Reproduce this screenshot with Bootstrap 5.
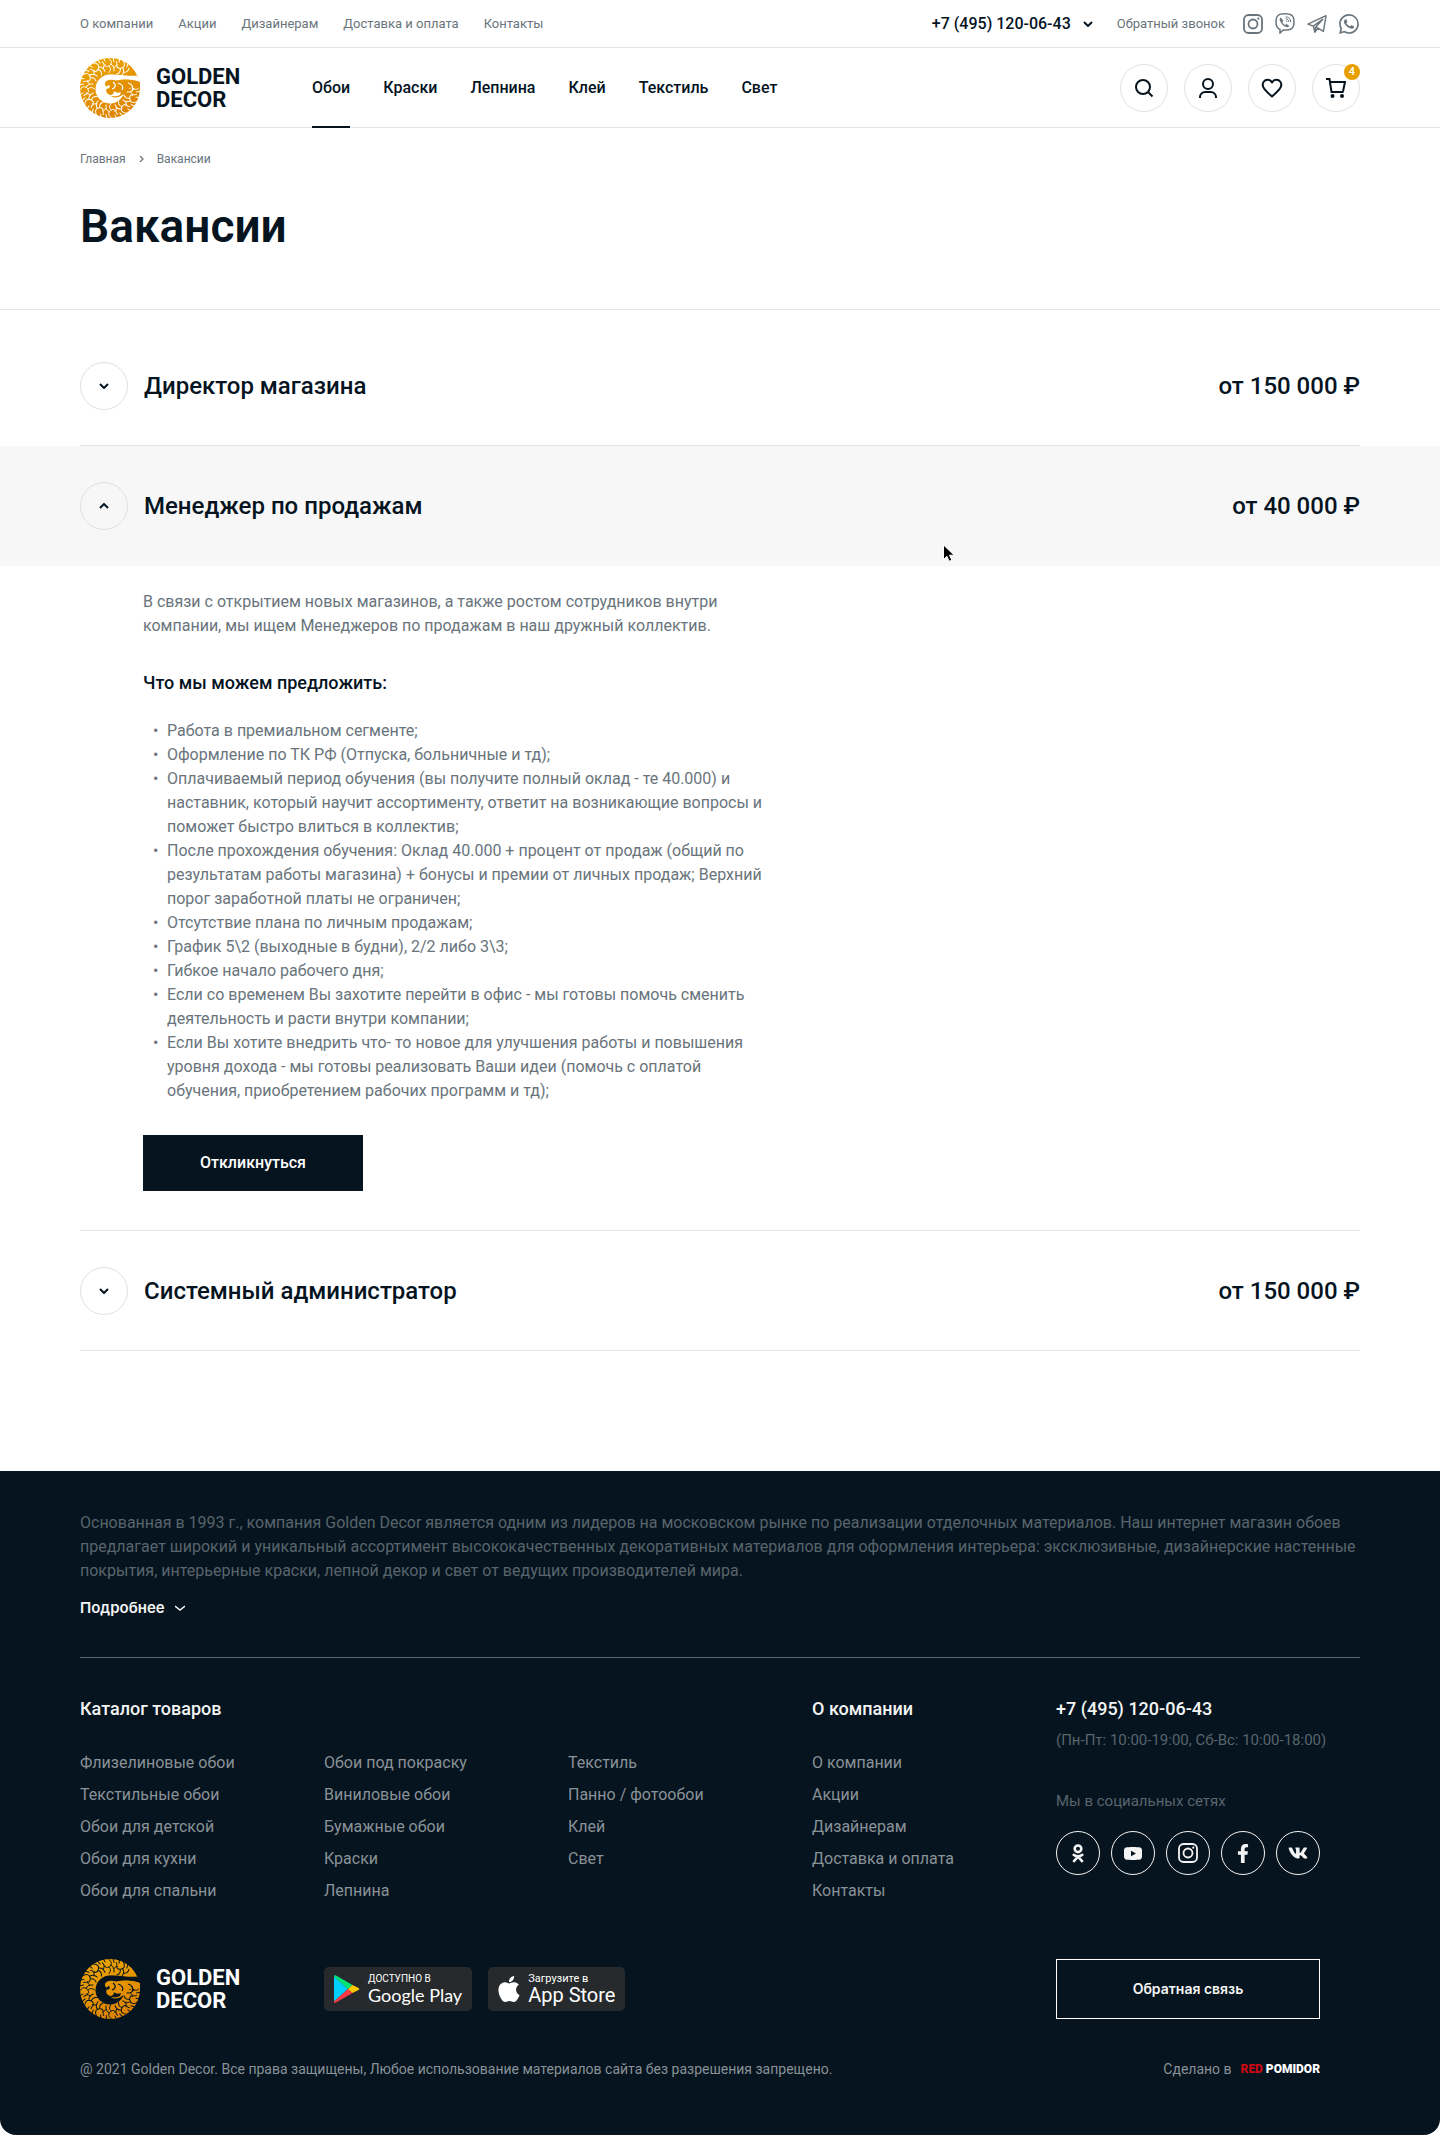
<!DOCTYPE html>
<html lang="ru">
<head>
<meta charset="utf-8">
<meta name="viewport" content="width=device-width, initial-scale=1">
<title>Вакансии — Golden Decor</title>
<link href="https://cdn.jsdelivr.net/npm/bootstrap@5.3.0/dist/css/bootstrap.min.css" rel="stylesheet">
<style>
  :root { --ink: #05141f; --muted: #69747c; --line: #e5e5e5; --gold: #e8a000; }
  body { font-family: Roboto, "Liberation Sans", sans-serif; color: var(--ink); font-size: 16px; line-height: 24px; background: #fff; }
  a { text-decoration: none; color: inherit; }
  svg { display: block; flex: none; }
  .wrap { max-width: 1440px; padding-left: 80px; padding-right: 80px; }

  .topbar { border-bottom: 1px solid var(--line); color: var(--muted); font-size: 13px; line-height: 47px; }
  .topbar nav { gap: 25px; }
  .phone-btn { border: 0; background: none; padding: 0; color: var(--ink); font-size: 16px; font-weight: 500; gap: 12px; }
  .messengers { gap: 12px; padding: 0 1px 0 18px; }
  .callback { margin-left: 24px; }

  .mainbar { border-bottom: 1px solid var(--line); }
  .brand { gap: 16px; width: 160px; }
  .brand-name { font-size: 22px; font-weight: 700; line-height: 23px; }
  .main-nav { gap: 33px; margin-left: 72px; }
  .main-nav a { font-weight: 500; line-height: 79px; margin-bottom: -1px; border-bottom: 2px solid transparent; height: 80px; }
  .main-nav a.current { border-color: var(--ink); }
  .round { width: 48px; height: 48px; border: 1px solid #e0e0e0; border-radius: 50%; background: none; color: var(--ink); padding: 0; }
  .count { position: absolute; top: -1px; right: -1px; width: 16px; height: 16px; border-radius: 50%; background: var(--gold); color: #fff; font-size: 11px; font-weight: 500; line-height: 16px; text-align: center; }

  .page-head { border-bottom: 1px solid var(--line); padding: 23px 0 55px; }
  .crumbs { font-size: 12px; line-height: 16px; color: var(--muted); gap: 13px; margin-bottom: 31px; }
  .page-head h1 { font-size: 46px; line-height: 56px; font-weight: 600; margin: 0; }

  .jobs { padding: 16px 0 120px; }
  .job-toggle { width: 100%; border: 0; background: none; padding: 0; color: var(--ink); height: 119px; font-size: 24px; font-weight: 500; gap: 16px; text-align: left; }
  .ruled { border-bottom: 1px solid var(--line); }
  .open-row { background: #f7f7f7; }
  .open-row .job-toggle { height: 120px; }
  .pointer { position: absolute; left: 942px; top: 98px; }
  .job-body { padding: 24px 0 39px 63px; color: var(--muted); }
  .job-text { max-width: 624px; }
  .job-text p { margin: 0; }
  .job-text h3 { font-size: 18px; line-height: 25px; font-weight: 500; color: var(--ink); margin: 32px 0 24px; }
  .job-text ul { list-style: none; margin: 0 0 32px; padding: 0 0 0 24px; }
  .job-text li::before { content: "•"; float: left; margin-left: -14px; }
  .apply { display: block; width: 220px; height: 56px; border: 0; background: var(--ink); color: #fff; font-weight: 500; }

  .site-foot { background: var(--ink); color: #8a9297; border-radius: 0 0 16px 16px; padding: 40px 0 56px; }
  .about { color: #59646c; margin: 0 0 13px; }
  .more, .feedback { font-family: Inter, Roboto, sans-serif; font-size: 14px; font-weight: 600; color: #f4f4f4; background: none; }
  .more { border: 0; padding: 0; gap: 10px; font-size: 15px; line-height: 24px; }
  .about-box { border-bottom: 1px solid #59646c; padding-bottom: 37px; }
  .foot-grid { display: grid; grid-template-columns: 244fr 244fr 244fr 244fr 304fr; }
  .foot-links { padding-top: 39px; }
  .foot-apps { padding-top: 52px; }
  .foot-grid h4 { font-size: 18px; line-height: 24px; font-weight: 500; color: #f4f4f4; margin: 0 0 26px; }
  .foot-grid ul { list-style: none; margin: 0; padding: 0; line-height: 32px; }
  .span-3 { grid-column: span 3; }
  .span-4 { grid-column: span 4; }
  .cat-cols { display: grid; grid-template-columns: repeat(3, 1fr); }
  .tel { font-size: 18px; font-weight: 500; color: #f4f4f4; }
  .small-grey { font-size: 15px; line-height: 20px; color: #59646c; }
  .hours { margin-top: 9px; }
  .follow { margin-top: 41px; }
  .socials { gap: 11px; margin-top: 20px; }
  .socials a { width: 44px; height: 44px; border: 1px solid #f4f4f4; border-radius: 50%; color: #f4f4f4; }
  .store { height: 44px; border-radius: 5px; background: #262a2c; color: #fff; gap: 8px; padding: 0 10px; }
  .store-top { display: block; font-size: 10px; line-height: 12px; }
  .store-name { display: block; font-family: Lato, Roboto, sans-serif; font-size: 18px; line-height: 21px; }
  .apple .store-top { font-size: 11px; }
  .apple .store-name { font-family: Roboto, sans-serif; font-size: 20px; }
  .feedback { width: 264px; height: 60px; border: 1px solid #fff; }
  .legal { font-size: 14px; line-height: 20px; margin-top: 40px; }
  .studio { width: 264px; gap: 9px; }
  .studio-name { font-weight: 900; font-size: 12px; color: #fff; }
  .studio-name span { color: #c80a14; }
</style>
<script src="https://cdn.jsdelivr.net/npm/bootstrap@5.3.0/dist/js/bootstrap.bundle.min.js"></script>
</head>
<body>
<svg width="0" height="0" class="position-absolute" aria-hidden="true">
  <defs>
    <linearGradient id="goldFill" x1="0" y1="0" x2=".4" y2="1"><stop offset="0" stop-color="#eda803"/><stop offset="1" stop-color="#de8500"/></linearGradient>
    <g id="curl" fill="none" stroke="#000" stroke-width="1" stroke-linecap="round">
      <path d="M27 -1C32 2 32.500 5 29.500 7.500C27 9.500 24.500 8.500 25 6.500M30.500 6C33 7 34.500 9.500 34 13M33.500 9.500C36 9 37.500 6.500 36.500 3.500M29 8C31 10 31 12 29 14.500"/>
      <path d="M25 3L23 -1M34 3.500L33 -1"/>
    </g>
    <mask id="emblemMask" maskUnits="userSpaceOnUse" x="0" y="0" width="60" height="60">
      <circle cx="30" cy="30" r="30" fill="#fff"/>
      <use href="#curl"/><use href="#curl" transform="rotate(30 30 30)"/><use href="#curl" transform="rotate(90 30 30)"/><use href="#curl" transform="rotate(120 30 30)"/><use href="#curl" transform="rotate(150 30 30)"/><use href="#curl" transform="rotate(180 30 30)"/><use href="#curl" transform="rotate(210 30 30)"/><use href="#curl" transform="rotate(240 30 30)"/><use href="#curl" transform="rotate(270 30 30)"/><use href="#curl" transform="rotate(300 30 30)"/><use href="#curl" transform="rotate(330 30 30)"/>
      <circle cx="30" cy="31" r="14.500" fill="#000"/>
      <path d="M27 17C38 15 48 19 57 17.500L61 24C50 20.500 42 22 34 22Z" fill="#000"/>
      <path d="M61 24.500C52 21 44 21 36 22.500C31 21 25 22 25 26C25 29 28 29 28 27C31 27 30 31 27 30.500C25 33 27 36 30 37C33 37 34 35 34 33C36 35 38 35 41 34L40 37C36 39 33 38 31 38.500C37 41 43 38 46 33C50 28 56 29 61 30Z" fill="#fff"/>
      <path d="M33 24C37 27 35 30 32 31M38 25C42 26 44 29 42 32M48 25C52 26 54 29 52 33" fill="none" stroke="#000" stroke-width="1.200"/>
    </mask>
    <symbol id="emblem" viewBox="0 0 60 60"><rect width="60" height="60" fill="url(#goldFill)" mask="url(#emblemMask)"/></symbol>
    <symbol id="insta" viewBox="0 0 20 20"><g fill="none" stroke="currentColor" stroke-width="1.800"><rect x="1" y="1" width="18" height="18" rx="4.500"/><circle cx="10" cy="10" r="4.500"/></g><circle cx="15.300" cy="4.700" r="1.100" fill="currentColor"/></symbol>
    <symbol id="chev" viewBox="0 0 10 6"><path d="M1 1l4 4 4-4" fill="none" stroke="currentColor" stroke-width="2"/></symbol>
  </defs>
</svg>

<header>
  <div class="topbar">
    <div class="wrap container-fluid d-flex align-items-center">
      <nav class="d-flex me-auto" aria-label="Информация">
        <a href="#">О компании</a><a href="#">Акции</a><a href="#">Дизайнерам</a><a href="#">Доставка и оплата</a><a href="#">Контакты</a>
      </nav>
      <button class="phone-btn d-flex align-items-center" type="button">+7 (495) 120-06-43 <svg width="10" height="6"><use href="#chev"/></svg></button>
      <a class="callback" href="#">Обратный звонок</a>
      <div class="messengers d-flex align-items-center">
        <a href="#" aria-label="Instagram"><svg width="20" height="20"><use href="#insta"/></svg></a>
        <a href="#" aria-label="Viber"><svg width="20" height="21" viewBox="0 0 20 21" fill="none" stroke="currentColor" stroke-width="1.500"><path d="M10 .8C3.500 .8 1 2.500 1 9c0 4.300 1 6.400 4 7.400V20l3.200-3.100c8 .5 10.800-1.500 10.800-7.900C19 2.500 16.500.8 10 .8z"/><path d="M5.700 4.400c-1.400.9-1.300 2.200-.4 4 1.300 2.600 3.300 4.600 6 5.700 1.300.5 2.400-.2 2.800-1.400l-2.400-1.800-1.300 1.200C8.700 11.400 7.800 10.400 7.300 9l1.100-1.200z" fill="currentColor" stroke="none"/><path d="M10.500 3.800c3.400.2 5.200 2 5.300 5.400M10.700 5.800c2 .1 3.100 1.200 3.200 3.200M10.900 7.700c.7.1 1.100.5 1.200 1.200" stroke-width="1"/></svg></a>
        <a href="#" aria-label="Telegram"><svg width="20" height="20" viewBox="0 0 21 20" fill="none" stroke="currentColor" stroke-width="1.500" stroke-linejoin="round"><path d="M.9 10.200L20 1.300l-2.800 16.500-5.700-3.500-3.300 4.300-1.600-6.300zM6.600 12.300L16.500 5 9 13.500l-.8 5.100M9 13.500l2.500.8"/></svg></a>
        <a href="#" aria-label="WhatsApp"><svg width="20" height="20" viewBox="0 0 16 16" fill="currentColor"><path d="M13.601 2.326A7.850 7.850 0 0 0 7.994 0C3.627 0 .068 3.558.064 7.926c0 1.399.366 2.760 1.057 3.965L0 16l4.204-1.102a7.900 7.900 0 0 0 3.790.965h.004c4.368 0 7.926-3.558 7.930-7.930A7.900 7.900 0 0 0 13.600 2.326zM7.994 14.521a6.600 6.600 0 0 1-3.356-.92l-.24-.144-2.494.654.666-2.433-.156-.251a6.560 6.560 0 0 1-1.007-3.505c0-3.626 2.957-6.584 6.591-6.584a6.560 6.560 0 0 1 4.660 1.931 6.560 6.560 0 0 1 1.928 4.660c-.004 3.639-2.961 6.592-6.592 6.592zm3.615-4.934c-.197-.099-1.170-.578-1.353-.646-.182-.065-.315-.099-.445.099-.133.197-.513.646-.627.775-.114.133-.232.148-.43.050-.197-.1-.836-.308-1.592-.985-.59-.525-.985-1.175-1.103-1.372-.114-.198-.011-.304.088-.403.087-.088.197-.232.296-.346.1-.114.133-.198.198-.33.065-.134.034-.248-.015-.347-.05-.099-.445-1.076-.612-1.470-.16-.389-.323-.335-.445-.34-.114-.007-.247-.007-.38-.007a.73.73 0 0 0-.529.247c-.182.198-.691.677-.691 1.654s.71 1.916.81 2.049c.098.133 1.394 2.132 3.383 2.992.47.205.84.326 1.129.418.475.152.904.129 1.246.080.380-.058 1.171-.48 1.338-.943.164-.464.164-.86.114-.943-.049-.084-.182-.133-.38-.232z"/></svg></a>
      </div>
    </div>
  </div>
  <div class="mainbar">
    <div class="wrap container-fluid d-flex align-items-center">
      <a href="#" class="brand d-flex align-items-center"><svg width="60" height="60"><use href="#emblem"/></svg><span class="brand-name">GOLDEN<br>DECOR</span></a>
      <nav class="main-nav d-flex me-auto" aria-label="Каталог">
        <a class="current" href="#" aria-current="page">Обои</a><a href="#">Краски</a><a href="#">Лепнина</a><a href="#">Клей</a><a href="#">Текстиль</a><a href="#">Свет</a>
      </nav>
      <div class="d-flex gap-3">
        <button class="round d-flex align-items-center justify-content-center" type="button" aria-label="Поиск"><svg width="20" height="20" viewBox="0 0 20 20" fill="none" stroke="currentColor" stroke-width="2"><circle cx="9" cy="9" r="7"/><path d="M14 14l4.500 4.500"/></svg></button>
        <button class="round d-flex align-items-center justify-content-center" type="button" aria-label="Профиль"><svg width="20" height="20" viewBox="0 0 20 20" fill="none" stroke="currentColor" stroke-width="2"><circle cx="10" cy="6" r="5"/><path d="M2 20v-1c0-3 2.500-5 5-5h6c2.500 0 5 2 5 5v1"/></svg></button>
        <button class="round d-flex align-items-center justify-content-center" type="button" aria-label="Избранное"><svg width="22" height="20" viewBox="0 0 22 20" fill="none" stroke="currentColor" stroke-width="2" stroke-linejoin="round"><path d="M11 4.500C9 1 4.500 1.200 2.700 3.800 1 6.300 1.700 9 3.500 11.200 5.500 13.700 8 16 11 18.500c3-2.500 5.500-4.800 7.500-7.300 1.800-2.200 2.500-4.900.8-7.400C17.500 1.200 13 1 11 4.500z"/></svg></button>
        <button class="round position-relative d-flex align-items-center justify-content-center" type="button" aria-label="Корзина"><svg width="20" height="20" viewBox="0 0 20 20" fill="none" stroke="currentColor" stroke-width="2"><path d="M0 1h3.500L5.500 14h12M4 4h15l-2 9.500"/><circle cx="6.500" cy="18" r="2" fill="currentColor" stroke="none"/><circle cx="16" cy="18" r="2" fill="currentColor" stroke="none"/></svg><span class="count">4</span></button>
      </div>
    </div>
  </div>
</header>

<main>
  <section class="page-head">
    <div class="wrap container-fluid">
      <nav class="crumbs d-flex align-items-center" aria-label="Навигация"><a href="#">Главная</a><svg width="5" height="6" viewBox="0 0 5 6"><path d="M1 0l3 3-3 3" fill="none" stroke="currentColor" stroke-width="1.300"/></svg><span>Вакансии</span></nav>
      <h1>Вакансии</h1>
    </div>
  </section>

  <section class="jobs">
    <div class="wrap container-fluid">
      <div class="ruled"><button class="job-toggle d-flex align-items-center" type="button" aria-expanded="false"><span class="round d-flex align-items-center justify-content-center"><svg width="10" height="6"><use href="#chev"/></svg></span><span class="me-auto">Директор магазина</span><span>от 150 000 ₽</span></button></div>
    </div>
    <div class="open-row position-relative">
      <div class="wrap container-fluid">
        <button class="job-toggle d-flex align-items-center" type="button" data-bs-toggle="collapse" data-bs-target="#job2" aria-expanded="true" aria-controls="job2"><span class="round d-flex align-items-center justify-content-center"><svg width="10" height="6" viewBox="0 0 10 6"><path d="M1 5l4-4 4 4" fill="none" stroke="currentColor" stroke-width="2"/></svg></span><span class="me-auto">Менеджер по продажам</span><span>от 40 000 ₽</span></button>
      </div>
      <svg class="pointer" width="14" height="19" viewBox="0 0 14 19"><path d="M1.500 1v14.500l3.400-3.200 2.300 5 2.600-1.200-2.300-4.900h4.700z" fill="#000" stroke="#fff" stroke-width="1"/></svg>
    </div>
    <div class="wrap container-fluid">
      <div class="ruled">
        <div class="collapse show" id="job2">
          <div class="job-body">
            <div class="job-text">
              <p>В связи с открытием новых магазинов, а также ростом сотрудников внутри компании, мы ищем Менеджеров по продажам в наш дружный коллектив.</p>
              <h3>Что мы можем предложить:</h3>
              <ul>
                <li>Работа в премиальном сегменте;</li>
                <li>Оформление по ТК РФ (Отпуска, больничные и тд);</li>
                <li>Оплачиваемый период обучения (вы получите полный оклад - те 40.000) и наставник, который научит ассортименту, ответит на возникающие вопросы и поможет быстро влиться в коллектив;</li>
                <li>После прохождения обучения: Оклад 40.000 + процент от продаж (общий по результатам работы магазина) + бонусы и премии от личных продаж; Верхний порог заработной платы не ограничен;</li>
                <li>Отсутствие плана по личным продажам;</li>
                <li>График 5\2 (выходные в будни), 2/2 либо 3\3;</li>
                <li>Гибкое начало рабочего дня;</li>
                <li>Если со временем Вы захотите перейти в офис - мы готовы помочь сменить деятельность и расти внутри компании;</li>
                <li>Если Вы хотите внедрить что- то новое для улучшения работы и повышения уровня дохода - мы готовы реализовать Ваши идеи (помочь с оплатой обучения, приобретением рабочих программ и тд);</li>
              </ul>
            </div>
            <button class="apply" type="button">Откликнуться</button>
          </div>
        </div>
      </div>
      <div class="ruled"><button class="job-toggle d-flex align-items-center" type="button" aria-expanded="false"><span class="round d-flex align-items-center justify-content-center"><svg width="10" height="6"><use href="#chev"/></svg></span><span class="me-auto">Системный администратор</span><span>от 150 000 ₽</span></button></div>
    </div>
  </section>
</main>

<footer class="site-foot">
  <div class="wrap container-fluid">
    <div class="about-box">
      <p class="about">Основанная в 1993 г., компания Golden Decor является одним из лидеров на московском рынке по реализации отделочных материалов. Наш интернет магазин обоев предлагает широкий и уникальный ассортимент высококачественных декоративных материалов для оформления интерьера: эксклюзивные, дизайнерские настенные покрытия, интерьерные краски, лепной декор и свет от ведущих производителей мира.</p>
      <button class="more d-flex align-items-center" type="button">Подробнее <svg width="10" height="6" viewBox="0 0 10 6"><path d="M0 1l5 4 5-4" fill="none" stroke="currentColor" stroke-width="1.500"/></svg></button>
    </div>

    <div class="foot-grid foot-links">
      <div class="span-3">
        <h4>Каталог товаров</h4>
        <div class="cat-cols">
          <ul><li><a href="#">Флизелиновые обои</a></li><li><a href="#">Текстильные обои</a></li><li><a href="#">Обои для детской</a></li><li><a href="#">Обои для кухни</a></li><li><a href="#">Обои для спальни</a></li></ul>
          <ul><li><a href="#">Обои под покраску</a></li><li><a href="#">Виниловые обои</a></li><li><a href="#">Бумажные обои</a></li><li><a href="#">Краски</a></li><li><a href="#">Лепнина</a></li></ul>
          <ul><li><a href="#">Текстиль</a></li><li><a href="#">Панно / фотообои</a></li><li><a href="#">Клей</a></li><li><a href="#">Свет</a></li></ul>
        </div>
      </div>
      <div>
        <h4>О компании</h4>
        <ul><li><a href="#">О компании</a></li><li><a href="#">Акции</a></li><li><a href="#">Дизайнерам</a></li><li><a href="#">Доставка и оплата</a></li><li><a href="#">Контакты</a></li></ul>
      </div>
      <div>
        <a class="tel d-block" href="tel:+74951200643">+7 (495) 120-06-43</a>
        <div class="small-grey hours">(Пн-Пт: 10:00-19:00, Сб-Вс: 10:00-18:00)</div>
        <div class="small-grey follow">Мы в социальных сетях</div>
        <div class="socials d-flex">
          <a class="d-flex align-items-center justify-content-center" href="#" aria-label="Одноклассники"><svg width="12" height="19" viewBox="0 0 12 19" fill="none" stroke="currentColor" stroke-width="2.600" stroke-linecap="round"><circle cx="6" cy="4.800" r="3.300"/><path d="M1.800 10.800c2.500 1.700 5.900 1.700 8.400 0M6 12.500l-4 4.600M6 12.500l4 4.600"/></svg></a>
          <a class="d-flex align-items-center justify-content-center" href="#" aria-label="YouTube"><svg width="18" height="13" viewBox="0 0 18 13" fill="currentColor" fill-rule="evenodd"><path d="M3 .3C9 0 9 0 15 .3c2 .1 3 1.200 3 3.200v6c0 2-1 3.100-3 3.200-6 .3-6 .3-12 0-2-.1-3-1.200-3-3.200v-6C0 1.500 1 .4 3 .3zM7 3.700v5.600l5-2.800z"/></svg></a>
          <a class="d-flex align-items-center justify-content-center" href="#" aria-label="Instagram"><svg width="20" height="20"><use href="#insta"/></svg></a>
          <a class="d-flex align-items-center justify-content-center" href="#" aria-label="Facebook"><svg width="12" height="19" viewBox="0 0 320 512" fill="currentColor"><path d="M279 288l14-93h-89v-60c0-25 12-50 52-50h40V6S260 0 225 0c-73 0-121 44-121 125v70H23v93h81v224h100V288z"/></svg></a>
          <a class="d-flex align-items-center justify-content-center" href="#" aria-label="ВКонтакте"><svg width="20" height="18" viewBox="0 0 576 512" fill="currentColor"><path d="M545 117.700c3.700-12.500 0-21.700-17.800-21.700h-58.900c-15 0-21.900 7.900-25.600 16.700 0 0-30 73.100-72.400 120.500-13.700 13.700-20 18.100-27.500 18.100-3.700 0-9.400-4.400-9.400-16.900V117.700c0-15-4.200-21.700-16.600-21.700h-92.600c-9.400 0-15 7-15 13.500 0 14.200 21.200 17.500 23.400 57.500v86.800c0 19-3.400 22.500-10.900 22.500-20 0-68.600-73.400-97.400-157.400-5.800-16.300-11.500-22.900-26.600-22.900H38.800c-16.800 0-20.200 7.900-20.200 16.700 0 15.600 20 93.100 93.100 195.500C160.400 378.100 229 416 291.400 416c37.500 0 42.100-8.400 42.100-22.900 0-66.800-3.400-73.100 15.400-73.100 8.700 0 23.700 4.400 58.700 38.100 40 40 46.600 57.900 69 57.900h58.900c16.800 0 25.300-8.400 20.400-25-11.200-34.900-86.900-106.700-90.300-111.500-8.700-11.200-6.200-16.200 0-26.200.1-.1 72-101.300 79.400-135.600z"/></svg></a>
        </div>
      </div>
    </div>

    <div class="foot-grid foot-apps align-items-center">
      <a href="#" class="brand d-flex align-items-center text-white"><svg width="60" height="60"><use href="#emblem"/></svg><span class="brand-name">GOLDEN<br>DECOR</span></a>
      <div class="span-3 d-flex gap-3">
        <a class="store d-flex align-items-center" href="#">
          <svg width="26" height="28" viewBox="0 0 26 28"><path d="M0 1.500v25L14 14z" fill="#00d0ff"/><path d="M0 1.500C0 .3 1 0 2 .5L18.500 10 14 14z" fill="#00e676"/><path d="M0 26.500c0 1.200 1 1.500 2 1L18.500 18 14 14z" fill="#ff3a44"/><path d="M18.500 10l6 3c1 .6 1 1.400 0 2l-6 3L14 14z" fill="#ffc900"/></svg>
          <span><span class="store-top">ДОСТУПНО В</span><span class="store-name">Google Play</span></span>
        </a>
        <a class="store apple d-flex align-items-center" href="#">
          <svg width="22" height="26" viewBox="2 0 20 24" fill="#fff"><path d="M12.152 6.896c-.948 0-2.415-1.078-3.960-1.040-2.040.027-3.910 1.183-4.961 3.014-2.117 3.675-.546 9.103 1.519 12.090 1.013 1.454 2.208 3.090 3.792 3.039 1.520-.065 2.090-.987 3.935-.987 1.831 0 2.350.987 3.960.948 1.637-.026 2.676-1.480 3.676-2.948 1.156-1.688 1.636-3.325 1.662-3.415-.039-.013-3.182-1.221-3.220-4.857-.026-3.040 2.480-4.494 2.597-4.559-1.429-2.090-3.623-2.324-4.390-2.376-2-.156-3.675 1.090-4.610 1.090zM15.530 3.830c.843-1.012 1.400-2.427 1.245-3.830-1.207.052-2.662.805-3.532 1.818-.78.896-1.454 2.338-1.273 3.714 1.338.104 2.715-.688 3.559-1.701"/></svg>
          <span><span class="store-top">Загрузите в</span><span class="store-name">App Store</span></span>
        </a>
      </div>
      <button class="feedback" type="button">Обратная связь</button>
    </div>

    <div class="foot-grid legal align-items-center">
      <div class="span-4">@ 2021 Golden Decor. Все права защищены, Любое использование материалов сайта без разрешения запрещено.</div>
      <div class="studio d-flex justify-content-end align-items-center">Сделано в <a class="studio-name" href="#"><span>RED</span> POMIDOR</a></div>
    </div>
  </div>
</footer>
</body>
</html>
